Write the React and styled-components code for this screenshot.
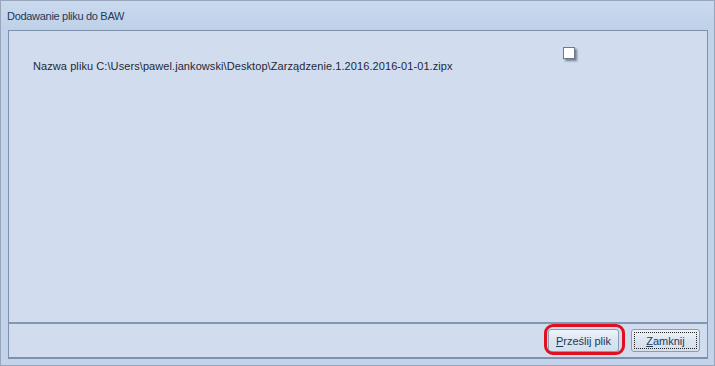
import React from 'react';
import styled, { createGlobalStyle } from 'styled-components';

const GlobalStyle = createGlobalStyle`
  html, body {
    margin: 0;
    padding: 0;
    background: #c4d5ea;
  }
  * {
    box-sizing: border-box;
  }
`;

const App = () => {
  return (
    <>
      <GlobalStyle />
      <Window>
        <TitleBar>Dodawanie pliku do BAW</TitleBar>
        <Body>
          <Panel>
            <Content>
              <CheckRow>
                <CheckBox />
              </CheckRow>
              <FileLabel>
                Nazwa pliku C:\Users\pawel.jankowski\Desktop\Zarządzenie.1.2016.2016-01-01.zipx
              </FileLabel>
            </Content>
            <Footer>
              <Highlighted>
                <Button>
                  <u>P</u>rześlij plik
                </Button>
              </Highlighted>
              <Button focused>
                <FocusRing>
                  <u>Z</u>amknij
                </FocusRing>
              </Button>
            </Footer>
          </Panel>
        </Body>
      </Window>
    </>
  );
};

export default App;

const Window = styled.div`
  display: flex;
  flex-direction: column;
  width: 715px;
  height: 366px;
  border: 1px solid #97a6bb;
  background: #c3d4ea;
  font-family: 'Liberation Sans', sans-serif;
  font-size: 11px;
  color: #1e2b3c;
`;

const TitleBar = styled.div`
  height: 29px;
  padding-left: 6px;
  display: flex;
  align-items: center;
  background: linear-gradient(#cad9ed, #bfd1e8);
  color: #1e395b;
  font-family: 'Liberation Sans', sans-serif;
  font-size: 11px;
  letter-spacing: -0.3px;
`;

const Body = styled.div`
  flex: 1;
  display: flex;
  padding: 0 6px 6px 7px;
`;

const Panel = styled.div`
  flex: 1;
  display: flex;
  flex-direction: column;
  background: #d1ddee;
  border: 1px solid #7f90aa;
  border-bottom-width: 2px;
`;

const Content = styled.div`
  flex: 1;
  display: flex;
  flex-direction: column;
  padding: 16px 0 0 24px;
`;

const CheckRow = styled.div`
  display: flex;
  padding-left: 530px;
  height: 13px;
`;

const CheckBox = styled.div`
  width: 12px;
  height: 12px;
  background: #ffffff;
  border: 1px solid #6f7a88;
  box-shadow: 2px 2px 2px rgba(40, 50, 70, 0.55);
`;

const FileLabel = styled.div`
  margin-top: -1px;
  line-height: 14px;
  font-family: 'Liberation Sans', sans-serif;
  font-size: 11px;
  letter-spacing: 0.08px;
  color: #1f2835;
`;

const Footer = styled.div`
  height: 35px;
  display: flex;
  align-items: center;
  justify-content: flex-end;
  gap: 12px;
  padding-right: 7px;
  border-top: 2px solid #8497b1;
`;

const Highlighted = styled.div`
  position: relative;
  display: flex;

  &::after {
    content: '';
    position: absolute;
    left: -4px;
    top: -5px;
    right: -6px;
    bottom: -3px;
    border: 3px solid #e0101e;
    border-radius: 9px;
    pointer-events: none;
  }
`;

const Button = styled.button`
  width: ${(p) => (p.focused ? '69px' : '71px')};
  height: 23px;
  padding: ${(p) => (p.focused ? '2px' : '0')};
  display: flex;
  align-items: center;
  justify-content: center;
  border: 1px solid #8a9bb4;
  border-radius: 3px;
  background: linear-gradient(#eef3f9, #dbe5f1 50%, #d4dfee);
  font-family: 'Liberation Sans', sans-serif;
  font-size: 11px;
  color: #1e395b;

  u {
    text-decoration: underline;
  }
`;

const FocusRing = styled.span`
  flex: 1;
  align-self: stretch;
  display: flex;
  align-items: center;
  justify-content: center;
  border: 1px dotted #222;
`;
